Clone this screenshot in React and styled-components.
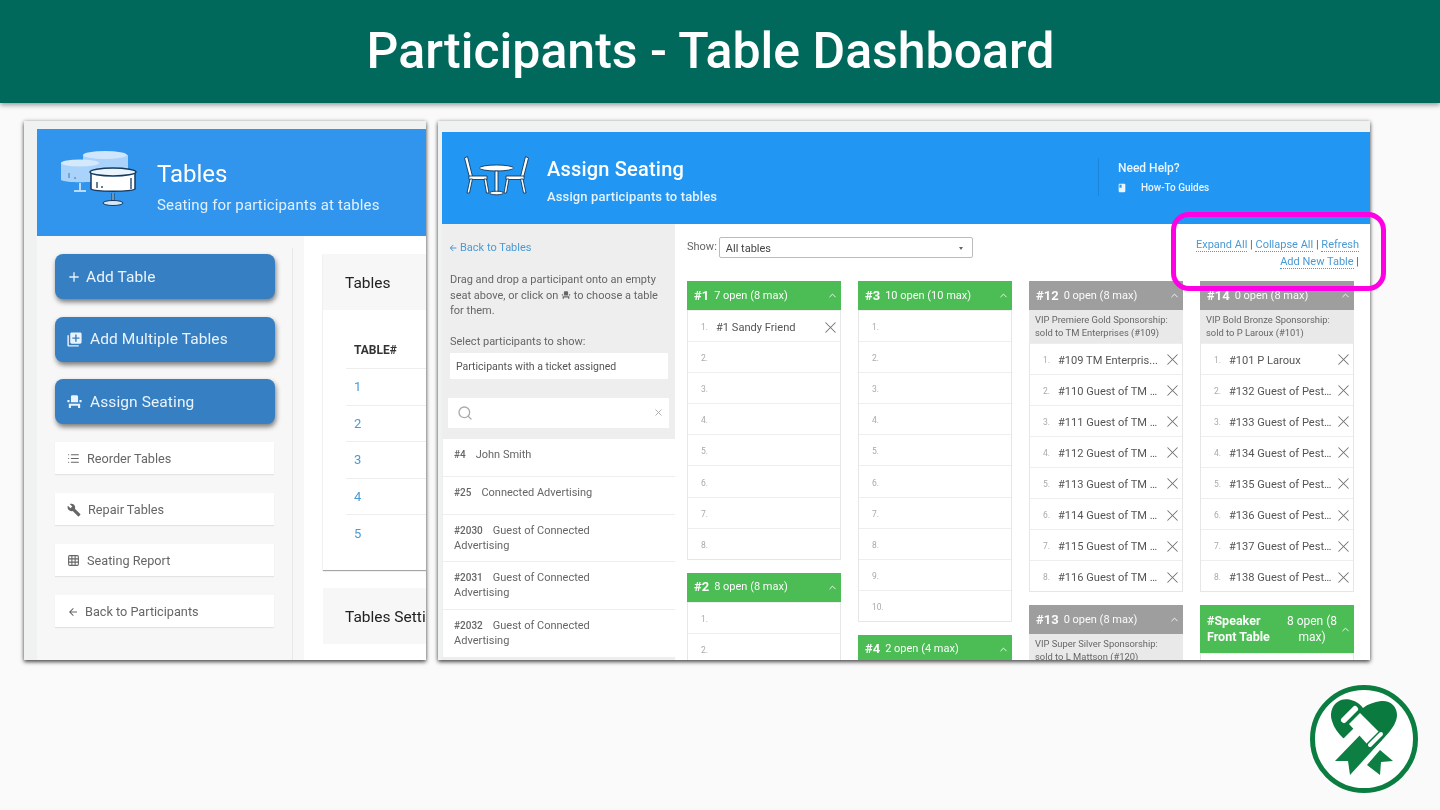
import React from 'react'
import styled, { createGlobalStyle } from 'styled-components'
import { ChevronUp, Grid3x3, List, Search, X } from 'lucide-react'
import { MdAdd, MdArrowBack, MdBook, MdBuild, MdEventSeat, MdLibraryAdd } from 'react-icons/md'

const GlobalStyle = createGlobalStyle`
  * { box-sizing: border-box; }
  html, body { margin: 0; height: 100%; }
  body { background: #fafafa; font-family: Roboto, "Liberation Sans", sans-serif; overflow: hidden; }
`

const Page = styled.div`
  width: 1440px;
  height: 810px;
  display: flex;
  flex-direction: column;
`

const Banner = styled.header`
  height: 103px;
  flex: none;
  background: #01695b;
  box-shadow: 0 2px 5px rgba(0, 0, 0, 0.4);
  color: #fff;
  font-size: 50px;
  font-weight: 500;
  display: flex;
  align-items: center;
  justify-content: center;
  padding-right: 19px;
  padding-bottom: 2px;
`

const Shots = styled.main`
  display: flex;
  gap: 12px;
  padding: 18px 0 0 24px;
`

const Shot = styled.section`
  width: ${p => p.$w}px;
  height: 539px;
  flex: none;
  position: relative;
  background: #f0f1f1;
  padding: ${p => p.$pad};
  box-shadow: 0 2px 4px rgba(0, 0, 0, 0.65), 0 0 4px rgba(0, 0, 0, 0.2);
`

const ShotInner = styled.div`
  height: 100%;
  overflow: hidden;
  display: flex;
  flex-direction: column;
  background: #fff;
  filter: blur(0.3px);
`

const Highlight = styled.div`
  position: absolute;
  left: 733px;
  top: 91px;
  width: 215px;
  height: 79px;
  border: 5px solid #ff00e5;
  border-radius: 18px;
`

/* left shot */
const BlueHead = styled.div`
  height: 107px;
  flex: none;
  background: #3195ee;
  color: #fff;
  display: flex;
  align-items: flex-start;
  padding: 21px 0 0 23px;
`

const HeadText = styled.div`
  margin-left: 19px;
  padding-top: 9px;
`

const HeadTitle = styled.div`
  font-size: 24px;
  line-height: 30px;
`

const HeadSub = styled.div`
  margin-top: 6px;
  font-size: 15px;
  line-height: 20px;
  letter-spacing: 0.15px;
  color: #e2f0fc;
  white-space: nowrap;
`

const LeftBody = styled.div`
  flex: 1;
  display: flex;
  min-height: 0;
`

const Side = styled.aside`
  width: 267px;
  flex: none;
  background: #f7f7f7;
  padding: 18px 0 0 18px;
  display: flex;
  flex-direction: column;
  position: relative;
  &:after {
    content: '';
    position: absolute;
    left: 255px;
    top: 12px;
    bottom: 0;
    width: 1px;
    background: #e8e8e8;
  }
`

const BigButton = styled.div`
  width: 220px;
  height: 45px;
  margin-bottom: 17.5px;
  flex: none;
  border-radius: 8px;
  background: #357fc2;
  box-shadow: 1px 3px 5px rgba(0, 0, 0, 0.5);
  color: #eaf3fb;
  font-size: 15.5px;
  letter-spacing: 0.1px;
  display: flex;
  align-items: center;
  gap: ${p => p.$gap}px;
  padding-left: 11px;
`

const SmallButton = styled.div`
  width: 219px;
  height: 32px;
  margin-bottom: 19px;
  flex: none;
  background: #fff;
  box-shadow: 0 1px 1px rgba(0, 0, 0, 0.08);
  color: #666;
  font-size: 12.7px;
  display: flex;
  align-items: center;
  gap: ${p => p.$gap}px;
  padding: 1px 0 0 12px;
  ${BigButton} + & {
    margin-top: 0.5px;
  }
`

const Content = styled.div`
  flex: 1;
  min-width: 0;
  padding: 18px 0 0 19px;
  overflow: hidden;
`

const Card = styled.div`
  width: 200px;
  margin-bottom: 18px;
  box-shadow: ${p => (p.$open ? 'none' : '0 1px 1px rgba(0, 0, 0, 0.35)')};
`

const CardHead = styled.div`
  height: 56px;
  background: #f7f7f7;
  color: #222;
  font-size: 15.5px;
  display: flex;
  align-items: center;
  padding: 2px 0 0 22px;
  white-space: nowrap;
`

const CardBody = styled.div`
  padding: 22px 0 18px 23px;
`

const THead = styled.div`
  height: 37px;
  font-size: 12px;
  font-weight: 700;
  color: #333;
  padding-left: 8px;
  display: flex;
  align-items: center;
  border-bottom: 1px solid #eee;
`

const TRow = styled.div`
  height: 36.5px;
  padding-left: 8px;
  font-size: 13px;
  color: #4a9ad4;
  display: flex;
  align-items: center;
  border-bottom: ${p => (p.$last ? 'none' : '1px solid #eee')};
`

/* right shot */
const AssignHead = styled.div`
  height: 92px;
  flex: none;
  background: #2196f3;
  color: #fff;
  display: flex;
  padding: 23px 0 0 22px;
`

const AssignText = styled.div`
  margin-left: 18px;
  width: 551px;
`

const AssignTitle = styled.div`
  font-size: 20px;
  line-height: 28px;
  font-weight: 500;
  letter-spacing: 0.2px;
`

const AssignSub = styled.div`
  margin-top: 5px;
  font-size: 13px;
  line-height: 18px;
  font-weight: 500;
  color: #e6f3fe;
  letter-spacing: 0.13px;
`

const Help = styled.div`
  height: 38px;
  margin-top: 3px;
  border-left: 1px solid #1b86dc;
  padding-left: 19px;
`

const HelpTitle = styled.div`
  font-size: 12px;
  line-height: 20px;
  font-weight: 500;
  color: #e9f5ff;
`

const HelpLink = styled.div`
  display: flex;
  align-items: center;
  gap: 14px;
  margin: 2px 0 0 -1px;
  font-size: 10px;
  line-height: 16px;
  font-weight: 500;
  color: #e9f5ff;
`

const AssignBody = styled.div`
  flex: 1;
  min-height: 0;
  display: flex;
`

const Picker = styled.aside`
  width: 233px;
  flex: none;
  background: #eee;
  color: #666;
  font-size: 11px;
  display: flex;
  flex-direction: column;
  overflow: hidden;
`

const PickerTop = styled.div`
  padding: 17px 7px 0 8px;
`

const BackLink = styled.div`
  display: flex;
  align-items: center;
  gap: 2px;
  margin-left: -2px;
  color: #4a9ad4;
  line-height: 14px;
`

const Hint = styled.p`
  margin: 17px 0 0;
  line-height: 15.5px;
`

const ShowLabel = styled.div`
  margin-top: 15px;
  line-height: 16px;
`

const WhiteField = styled.div`
  height: 26px;
  margin-top: 3px;
  background: #fff;
  padding: 1px 0 0 6px;
  font-size: 10.5px;
  color: #555;
  display: flex;
  align-items: center;
`

const SearchField = styled.div`
  height: 30px;
  margin: 19px -1px 11px -2px;
  background: #fff;
  color: #aaa;
  display: flex;
  align-items: center;
  justify-content: space-between;
  padding: 0 5px 0 9px;
`

const Person = styled.div`
  height: ${p => p.$h}px;
  flex: none;
  margin-left: 1px;
  background: #fff;
  border-bottom: 1px solid #eee;
  padding: 8px 40px 0 11px;
  line-height: 15.5px;
  font-size: 11px;
  color: #666;
`

const PersonId = styled.b`
  font-size: 10px;
  margin-right: 10px;
  font-weight: 500;
`

const Board = styled.div`
  flex: 1;
  min-width: 0;
  padding: 13px 0 0 12px;
  overflow: hidden;
`

const BoardTop = styled.div`
  height: 44px;
  display: flex;
  justify-content: space-between;
`

const ShowRow = styled.div`
  display: flex;
  align-items: flex-start;
  gap: 3px;
  font-size: 11px;
  color: #666;
  line-height: 20px;
`

const FakeSelect = styled.div`
  width: 254px;
  height: 21px;
  border: 1px solid #bbb;
  border-radius: 2px;
  background: #fff;
  color: #444;
  padding: 2px 9px 0 6px;
  display: flex;
  align-items: center;
  justify-content: space-between;
  margin-left: -1px;
  &:after {
    content: '';
    border: 2.5px solid transparent;
    border-top: 3px solid #666;
    border-bottom: 0;
  }
`

const Links = styled.div`
  width: 200px;
  padding-right: 11px;
  text-align: right;
  font-size: 11px;
  line-height: 16.5px;
  color: #555;
`

const DotLink = styled.span`
  color: #4a9ad4;
  border-bottom: 1px dotted #4a9ad4;
`

const Columns = styled.div`
  display: grid;
  grid-template-columns: repeat(4, 154px);
  column-gap: 17px;
`

const Column = styled.div`
  display: flex;
  flex-direction: column;
  gap: 13px;
`

const SeatTable = styled.div`
  border: 1px solid #e6e6e6;
  border-top: 0;
`

const TableTop = styled.div`
  min-height: ${p => (p.$tall ? 48 : 29)}px;
  margin: 0 -1px;
  background: ${p => (p.$full ? '#9e9e9e' : '#4cbd55')};
  color: #fbfbfb;
  display: flex;
  align-items: center;
  padding: 0 3px 0 7px;
  font-size: ${p => (p.$tall ? 12 : 11)}px;
`

const TableNo = styled.b`
  font-size: ${p => (p.$wide ? 12.5 : 13)}px;
  font-weight: 700;
  margin-right: 5px;
  flex: ${p => (p.$wide ? '0 0 72px' : 'none')};
  line-height: 16px;
`

const Open = styled.span`
  flex: 1;
  text-align: ${p => (p.$center ? 'center' : 'left')};
  line-height: 16px;
`

const Note = styled.div`
  height: 32.5px;
  background: #e9e9e9;
  color: #666;
  font-size: 9.4px;
  line-height: 13px;
  padding: 3px 6px 0;
  margin: 0 -1px;
  white-space: nowrap;
`

const Seat = styled.div`
  height: 31.1px;
  display: flex;
  align-items: center;
  padding: 2px 0 0 13px;
  border-top: 1px solid #eee;
`

const SeatNo = styled.span`
  width: 15px;
  flex: none;
  font-size: 8.5px;
  color: #aaa;
`

const SeatName = styled.span`
  flex: 1;
  min-width: 0;
  font-size: 11.1px;
  padding-top: 1px;
  color: #555;
  white-space: nowrap;
  overflow: hidden;
  text-overflow: ellipsis;
`

const Remove = styled(X)`
  flex: none;
  color: #707070;
`

const LogoRow = styled.div`
  display: flex;
  justify-content: flex-end;
  padding: 25px 22px 0 0;
`

const SeatGlyph = styled(MdEventSeat)`
  vertical-align: -1px;
`

const BackTables = () => (
  <svg width="78" height="58" viewBox="0 0 78 58">
    <path d="M23 5v16h45V5z" fill="#a9d3fa" />
    <ellipse cx="45" cy="5" rx="22" ry="4" fill="#cfe6fc" />
    <path d="M1 13v17c4 3 34 3 38 0V13z" fill="#a9d3fa" />
    <ellipse cx="20" cy="13" rx="19" ry="3.5" fill="#d5e9fc" />
    <path d="M9 23v5M15 27v2" stroke="#5b86ad" strokeWidth="1.2" />
    <path d="M20 33v7M14 41h12" stroke="#b9dafa" strokeWidth="2" />
    <path d="M31 22v17c4 3 40 3 44 0V22z" fill="#fff" stroke="#163a5f" strokeWidth="1.5" />
    <ellipse cx="53" cy="22" rx="23" ry="4" fill="#eaf4fd" stroke="#163a5f" strokeWidth="1.5" />
    <path d="M37 32v6M42 36v2M71 28v11" stroke="#163a5f" strokeWidth="1.3" />
    <path d="M53 43v8" stroke="#163a5f" strokeWidth="3" />
    <path d="M53 43v8" stroke="#d6e8f8" strokeWidth="1" />
    <ellipse cx="53" cy="53" rx="10" ry="2.5" fill="#d6e8f8" stroke="#163a5f" />
  </svg>
)

const DiningIcon = () => (
  <svg width="65" height="42" viewBox="0 0 65 42" fill="#fff" stroke="#12395e" strokeWidth="0.9">
    <path d="M0.5 3l3-1.5 5 20-3 1zM64.5 3l-3-1.5-5 20 3 1z" />
    <path d="M5 21h18v3.5H5zM42 21h18v3.5H42z" />
    <path d="M6 24l-3 14 2.5 0 3-14zM20 24l2.5 14 2.5 0-2.5-14zM59 24l3 14-2.5 0-3-14zM45 24l-2.5 14-2.5 0 2.5-14z" />
    <ellipse cx="32.5" cy="13" rx="17" ry="3" />
    <path d="M31 16h3v21h-3z" />
    <ellipse cx="32.5" cy="38" rx="7" ry="1.8" />
  </svg>
)

const Logo = () => (
  <svg width="108" height="108" viewBox="0 0 108 108">
    <circle cx="54" cy="54" r="51.5" fill="#fff" stroke="#0b7d40" strokeWidth="5" />
    <path d="M53 23C47 15 37 13 31 15 23 18 19 27 22 36c2 7 6 12 11 17L60 67C72 55 87 42 87 30c0-9-7-15-16-14-7 1-13 3-18 7z" fill="#0b7a3e" />
    <path d="M29 58L46 41 55 47 40 66z" fill="#fff" />
    <path d="M53 47L25 76H38L40 90 72 55z" fill="#0d7f42" />
    <path d="M57 80L70 65 83 76 71 77 70 90z" fill="#0d7f42" />
    <path d="M39 39L50 28 70 48 58 60z" fill="#fff" />
    <path d="M34 35L45 24" stroke="#fff" strokeWidth="6" strokeLinecap="round" />
    <path d="M60 60L71 49" stroke="#0b7a3e" strokeWidth="7" strokeLinecap="round" />
    <path d="M60 60L71 49" stroke="#fff" strokeWidth="4" strokeLinecap="round" />
  </svg>
)

const people = [
  { id: '#4', name: 'John Smith', h: 38 },
  { id: '#25', name: 'Connected Advertising', h: 38 },
  { id: '#2030', name: 'Guest of Connected Advertising', h: 47 },
  { id: '#2031', name: 'Guest of Connected Advertising', h: 48 },
  { id: '#2032', name: 'Guest of Connected Advertising', h: 48 },
]

const guests = (start, label, count = 8) =>
  Array.from({ length: count }, (_, i) => `#${start + i} ${label}`)

const pest = ['#101 P Laroux', ...guests(132, 'Guest of Pest Control Inc', 7)]
const tm = guests(109, 'Guest of TM Enterprises')
tm[0] = '#109 TM Enterpris...'

const boardColumns = [
  [
    { no: '#1', open: '7 open (8 max)', names: ['#1 Sandy Friend', '', '', '', '', '', '', ''] },
    { no: '#2', open: '8 open (8 max)', names: Array(8).fill('') },
  ],
  [
    { no: '#3', open: '10 open (10 max)', names: Array(10).fill('') },
    { no: '#4', open: '2 open (4 max)', names: Array(4).fill('') },
  ],
  [
    {
      no: '#12',
      open: '0 open (8 max)',
      full: true,
      note: ['VIP Premiere Gold Sponsorship:', 'sold to TM Enterprises (#109)'],
      names: tm,
    },
    {
      no: '#13',
      open: '0 open (8 max)',
      full: true,
      note: ['VIP Super Silver Sponsorship:', 'sold to L Mattson (#120)'],
      names: [],
    },
  ],
  [
    {
      no: '#14',
      open: '0 open (8 max)',
      full: true,
      note: ['VIP Bold Bronze Sponsorship:', 'sold to P Laroux (#101)'],
      names: pest,
    },
    { no: '#Speaker Front Table', open: '8 open (8 max)', wide: true, names: Array(8).fill('') },
  ],
]

const App = () => (
  <Page>
    <GlobalStyle />
    <Banner>Participants - Table Dashboard</Banner>
    <Shots>
      <Shot $w={402} $pad="8px 0 0 13px">
        <ShotInner>
          <BlueHead>
            <BackTables />
            <HeadText>
              <HeadTitle>Tables</HeadTitle>
              <HeadSub>Seating for participants at tables</HeadSub>
            </HeadText>
          </BlueHead>
          <LeftBody>
            <Side>
              <BigButton $gap={4}><MdAdd size={16} />Add Table</BigButton>
              <BigButton $gap={7}><MdLibraryAdd size={17} />Add Multiple Tables</BigButton>
              <BigButton $gap={7}><MdEventSeat size={17} />Assign Seating</BigButton>
              <SmallButton $gap={7}><List size={13} />Reorder Tables</SmallButton>
              <SmallButton $gap={7}><MdBuild size={14} />Repair Tables</SmallButton>
              <SmallButton $gap={7}><Grid3x3 size={13} />Seating Report</SmallButton>
              <SmallButton $gap={6}><MdArrowBack size={12} />Back to Participants</SmallButton>
            </Side>
            <Content>
              <Card>
                <CardHead>Tables</CardHead>
                <CardBody>
                  <THead>TABLE#</THead>
                  {[1, 2, 3, 4, 5].map(n => (
                    <TRow key={n} $last={n === 5}>{n}</TRow>
                  ))}
                </CardBody>
              </Card>
              <Card $open>
                <CardHead>Tables Settings</CardHead>
              </Card>
            </Content>
          </LeftBody>
        </ShotInner>
      </Shot>

      <Shot $w={932} $pad="11px 0 0 4px">
        <ShotInner>
          <AssignHead>
            <DiningIcon />
            <AssignText>
              <AssignTitle>Assign Seating</AssignTitle>
              <AssignSub>Assign participants to tables</AssignSub>
            </AssignText>
            <Help>
              <HelpTitle>Need Help?</HelpTitle>
              <HelpLink><MdBook size={10} />How-To Guides</HelpLink>
            </Help>
          </AssignHead>
          <AssignBody>
            <Picker>
              <PickerTop>
                <BackLink><MdArrowBack size={10} />Back to Tables</BackLink>
                <Hint>
                  Drag and drop a participant onto an empty seat above, or click on{' '}
                  <SeatGlyph size={10} /> to choose a table for them.
                </Hint>
                <ShowLabel>Select participants to show:</ShowLabel>
                <WhiteField>Participants with a ticket assigned</WhiteField>
                <SearchField>
                  <Search size={16} strokeWidth={2} />
                  <X size={11} />
                </SearchField>
              </PickerTop>
              {people.map(p => (
                <Person key={p.id} $h={p.h}>
                  <PersonId>{p.id}</PersonId>
                  {p.name}
                </Person>
              ))}
            </Picker>
            <Board>
              <BoardTop>
                <ShowRow>
                  Show:
                  <FakeSelect>All tables</FakeSelect>
                </ShowRow>
                <Links>
                  <DotLink>Expand All</DotLink> | <DotLink>Collapse All</DotLink> | <DotLink>Refresh</DotLink>
                  <br />
                  <DotLink>Add New Table</DotLink> |
                </Links>
              </BoardTop>
              <Columns>
                {boardColumns.map((col, c) => (
                  <Column key={c}>
                    {col.map(t => (
                      <SeatTable key={t.no}>
                        <TableTop $full={t.full} $tall={t.wide}>
                          <TableNo $wide={t.wide}>{t.no}</TableNo>
                          <Open $center={t.wide}>{t.open}</Open>
                          <ChevronUp size={11} />
                        </TableTop>
                        {t.note && <Note>{t.note[0]}<br />{t.note[1]}</Note>}
                        {t.names.map((name, i) => (
                          <Seat key={i}>
                            <SeatNo>{i + 1}.</SeatNo>
                            <SeatName>{name}</SeatName>
                            {name && <Remove size={19} strokeWidth={1.3} />}
                          </Seat>
                        ))}
                      </SeatTable>
                    ))}
                  </Column>
                ))}
              </Columns>
            </Board>
          </AssignBody>
        </ShotInner>
        <Highlight />
      </Shot>
    </Shots>
    <LogoRow>
      <Logo />
    </LogoRow>
  </Page>
)

export default App
